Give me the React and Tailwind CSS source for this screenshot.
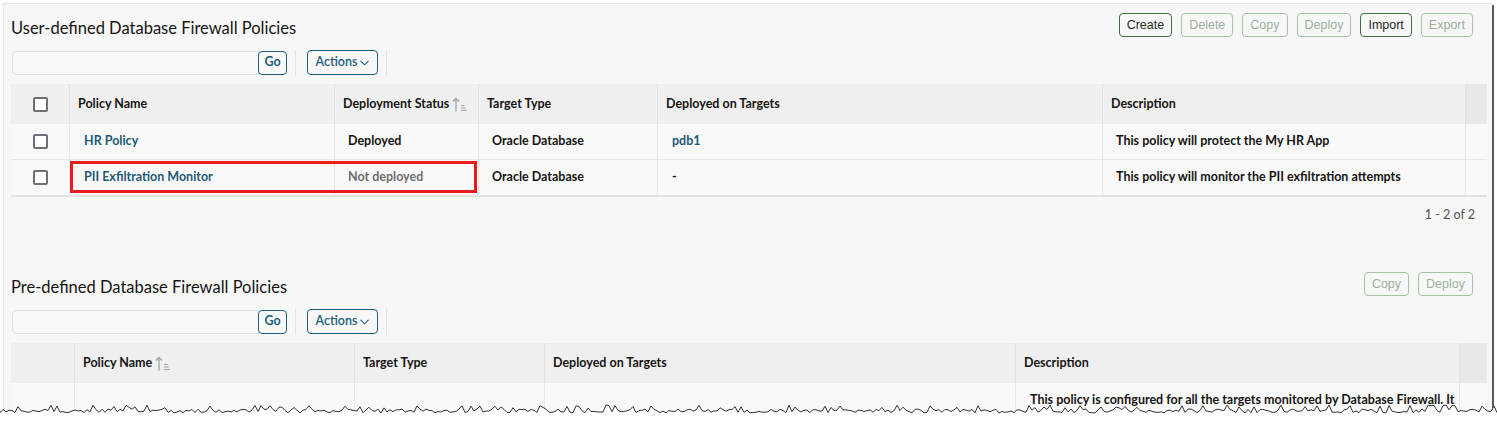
import React from 'react';

const FONT = { fontFamily: 'Lato, "Liberation Sans", sans-serif' };
const BTN_FONT = { fontFamily: '"Liberation Sans", Arial, sans-serif' };

const userCols = 'grid-cols-[59px_265px_144px_179px_445px_363px_21px]';
const predefCols = 'grid-cols-[64px_280px_190px_471px_444px_27px]';

const SortIcon = () => (
  <svg width="16" height="15" viewBox="0 0 16 15" className="ml-[3px] inline-block" fill="none">
    <path d="M4 14.5V1.5M1 4.5l3-3 3 3" stroke="#a3a3a3" strokeWidth="1.3" />
    <path d="M9 8.5h3.5M9 11h4.5M9 13.5h5.5" stroke="#a3a3a3" strokeWidth="1" />
  </svg>
);

const Checkbox = () => (
  <span className="block w-[15px] h-[15px] rounded-[2px] border-2 border-[#6f6f78] bg-white" />
);

const ActionButton = ({ label, enabled }) => (
  <button
    style={BTN_FONT}
    className={`h-[24px] px-[7px] rounded-[4px] border text-[12.5px] leading-none ${
      enabled ? 'border-[#3f6f3f] text-[#1f2a1f]' : 'border-[#a9c3a9] text-[#9db09d]'
    }`}
  >
    {label}
  </button>
);

const Toolbar = () => (
  <div className="flex items-center h-[25px]">
    <div className="flex items-center h-[24px] ml-[1px]">
      <input className="w-[247px] h-[24px] bg-[#f9f9f9] border border-[#dcdcdc] rounded-l-[5px] outline-none" />
      <button className="w-[29px] h-[24px] border border-[#1d5f7c] rounded-[4px] text-[12.5px] font-bold text-[#1d5f7c] -ml-[1px] bg-[#f9f9f9]">
        Go
      </button>
    </div>
    <div className="w-px h-[26px] bg-[#e3e3e3] ml-[8px]" />
    <button className="ml-[11px] w-[71px] h-[25px] border border-[#1d5f7c] rounded-[4px] text-[12.5px] font-semibold text-[#1d5f7c] flex items-center justify-center gap-[3px]">
      Actions
      <svg width="9" height="6" viewBox="0 0 9 6" fill="none">
        <path d="M0.5 0.8L4.5 4.8L8.5 0.8" stroke="#1d5f7c" strokeWidth="1.1" />
      </svg>
    </button>
    <div className="w-px h-[26px] bg-[#e3e3e3] ml-[8px]" />
  </div>
);

const HeaderCell = ({ children, last }) => (
  <div
    className={`h-[40px] flex items-center pl-[8px] text-[12.5px] font-bold text-[#161513] ${
      last ? 'bg-[#e8e8e8]' : 'bg-[#efefef] border-r border-[#e2e2e2]'
    }`}
  >
    {children}
  </div>
);

const Cell = ({ children, className = '' }) => (
  <div className={`h-[35px] flex items-center text-[12.5px] font-bold border-r border-[#e8e8e8] ${className}`}>
    {children}
  </div>
);

const userRows = [
  { name: 'HR Policy', status: 'Deployed', deployed: true, type: 'Oracle Database', targets: 'pdb1', desc: 'This policy will protect the My HR App' },
  { name: 'PII Exfiltration Monitor', status: 'Not deployed', deployed: false, type: 'Oracle Database', targets: '-', desc: 'This policy will monitor the PII exfiltration attempts', marked: true },
];

const UserTable = () => (
  <div className="w-[1476px]">
    <div className={`grid ${userCols}`}>
      <HeaderCell>
        <div className="w-full flex justify-center pr-[8px]">
          <Checkbox />
        </div>
      </HeaderCell>
      <HeaderCell>Policy Name</HeaderCell>
      <HeaderCell>
        Deployment Status
        <SortIcon />
      </HeaderCell>
      <HeaderCell>Target Type</HeaderCell>
      <HeaderCell>Deployed on Targets</HeaderCell>
      <HeaderCell>Description</HeaderCell>
      <HeaderCell last />
    </div>
    {userRows.map((r, i) => (
      <div
        key={r.name}
        className={`relative grid ${userCols} bg-[#f9f9f9] ${
          i === userRows.length - 1 ? 'border-b-2 border-[#e2e2e2]' : 'border-b border-[#e6e6e6]'
        }`}
      >
        <div className="h-[35px] flex items-center justify-center border-r border-[#e8e8e8]">
          <Checkbox />
        </div>
        <Cell className="text-[#1f5a75] pl-[14px]">{r.name}</Cell>
        <Cell className={r.deployed ? 'text-[#161513] pl-[13px]' : 'text-[#6e6e6e] pl-[13px]'}>{r.status}</Cell>
        <Cell className="text-[#161513] pl-[13px]">{r.type}</Cell>
        <Cell className={r.targets === 'pdb1' ? 'text-[#1f5a75] pl-[14px]' : 'text-[#161513] pl-[14px]'}>{r.targets}</Cell>
        <Cell className="text-[#161513] pl-[13px]">{r.desc}</Cell>
        <div />
        {r.marked && (
          <div className="absolute left-[59px] top-[1px] w-[407px] h-[32px] border-[3px] border-[#e81c1c] pointer-events-none" />
        )}
      </div>
    ))}
  </div>
);

const PredefTable = () => (
  <div className="w-[1476px]">
    <div className={`grid ${predefCols}`}>
      <HeaderCell />
      <HeaderCell>
        Policy Name
        <SortIcon />
      </HeaderCell>
      <HeaderCell>Target Type</HeaderCell>
      <HeaderCell>Deployed on Targets</HeaderCell>
      <HeaderCell>Description</HeaderCell>
      <HeaderCell last />
    </div>
    <div className={`grid ${predefCols} bg-[#f9f9f9]`}>
      <div className="h-[45px] border-r border-[#e8e8e8]" />
      <div className="h-[45px] border-r border-[#e8e8e8]" />
      <div className="h-[45px] border-r border-[#e8e8e8]" />
      <div className="h-[45px] border-r border-[#e8e8e8]" />
      <div className="h-[45px] pl-[14px] pt-[9px] text-[12.5px] font-bold text-[#161513] leading-[16px] border-r border-[#e8e8e8] whitespace-nowrap">
        This policy is configured for all the targets monitored by Database Firewall. It
      </div>
      <div />
    </div>
  </div>
);

const Section = ({ title, buttons, children, footer }) => (
  <div>
    <div className="flex justify-between items-start h-[38px] pr-[19px]">
      <h2 className="mt-[6px] text-[16.5px] leading-[20px] text-[#161513] font-normal">{title}</h2>
      <div className="flex gap-[9px] mt-[1px]">
        {buttons.map((b) => (
          <ActionButton key={b.label} label={b.label} enabled={b.enabled} />
        ))}
      </div>
    </div>
    <Toolbar />
    <div className="mt-[9px]">{children}</div>
    {footer}
  </div>
);

const tornPath = (() => {
  let seed = 11;
  const rnd = () => {
    seed = (seed * 9301 + 49297) % 233280;
    return seed / 233280;
  };
  let d = 'M0 10';
  for (let x = 0; x <= 1497; x += 3) {
    const r = rnd();
    const y = r > 0.85 ? 4 + rnd() * 3 : 8 + rnd() * 4;
    d += ` L${x} ${y.toFixed(1)}`;
  }
  return d;
})();

export default function App() {
  return (
    <div className="relative w-[1497px] h-[423px] bg-white overflow-hidden" style={FONT}>
      <div className="ml-[3px] mt-[3px] w-[1489px] h-[420px] bg-[#f7f7f7] border-l border-t border-[#e3e3e3] pl-[7px] pt-[8px] text-[#161513]">
        <Section
          title="User-defined Database Firewall Policies"
          buttons={[
            { label: 'Create', enabled: true },
            { label: 'Delete' },
            { label: 'Copy' },
            { label: 'Deploy' },
            { label: 'Import', enabled: true },
            { label: 'Export' },
          ]}
          footer={
            <div className="flex justify-end w-[1476px] pr-[12px] pt-[9px] h-[74px] text-[12.5px] text-[#555555]">
              1 - 2 of 2
            </div>
          }
        >
          <UserTable />
        </Section>
        <Section
          title="Pre-defined Database Firewall Policies"
          buttons={[{ label: 'Copy' }, { label: 'Deploy' }]}
        >
          <PredefTable />
        </Section>
      </div>
      {/* right edge shadow */}
      <div className="absolute left-[1492px] top-[5px] w-[2px] h-[408px] bg-[#5a5a5a]" />
      {/* torn bottom edge */}
      <svg className="absolute left-0 top-[401px]" width="1497" height="22" viewBox="0 0 1497 22">
        <path d={`${tornPath} L1497 22 L0 22 Z`} fill="#ffffff" />
        <path d={tornPath} fill="none" stroke="#333333" strokeWidth="1" />
      </svg>
    </div>
  );
}
